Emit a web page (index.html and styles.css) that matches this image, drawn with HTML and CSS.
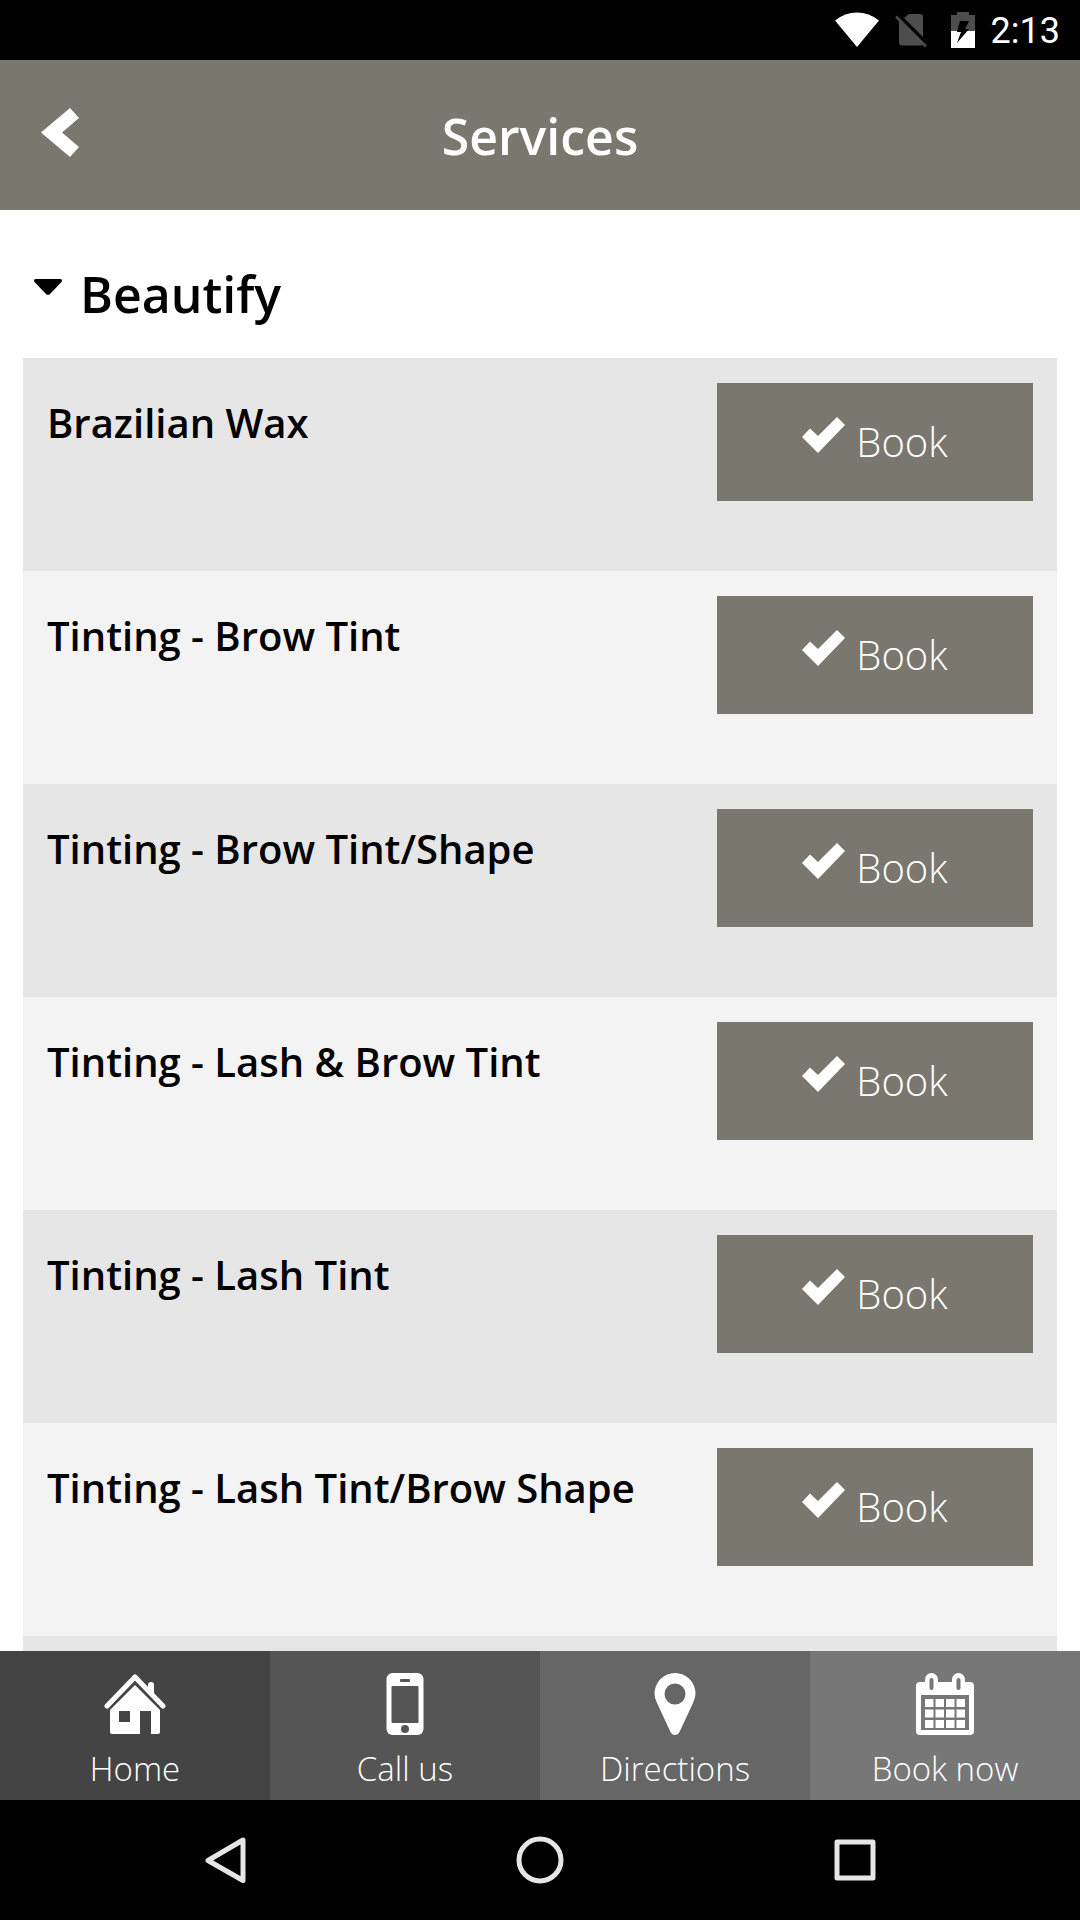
FILE: index.html
```html
<!DOCTYPE html>
<html lang="en">
<head>
  <meta charset="UTF-8" />
  <meta name="viewport" content="width=device-width, initial-scale=1.0"/>
  <title>Services</title>
  <link rel="stylesheet" href="styles.css">
</head>
<body>
  <svg class="sprite" aria-hidden="true">
    <symbol id="check" viewBox="0 0 44 36">
      <path d="M0 20L8 11.500L16 19L35 0L43 8L16 36Z"/>
    </symbol>
  </svg>

  <div class="status-bar">
    <svg width="44" height="36" viewBox="0 0 44 36">
      <path fill="#fff" d="M0 8.500Q10 .5 22 .5T44 8.500L22 35Z"/>
    </svg>
    <svg width="40" height="36" viewBox="0 0 40 36">
      <path fill="#4d4d4d" d="M14 2H25Q28 2 28 5V25L9 6ZM4 8L28 32Q27 33.500 25 33.500H7Q4 33.500 4 30.500Z"/>
      <path stroke="#4d4d4d" stroke-width="2.500" d="M1 4.500L31 34.500"/>
    </svg>
    <svg width="24" height="36" viewBox="0 0 24 36">
      <path fill="#4d4d4d" d="M6 0H18V3H24V19H0V3H6Z"/>
      <path fill="#fff" d="M0 19H24V36H0Z"/>
      <path d="M9 9H18L14 17H18L6 31L10 20H6Z"/>
    </svg>
    <span class="clock">2:13</span>
  </div>

  <header class="header">
    <button class="back" aria-label="Back">
      <svg width="38" height="49" viewBox="0 0 38 49">
        <path fill="#fff" d="M0 24.500L29 0L38 10L21 24.500L38 39L29 49Z"/>
      </svg>
    </button>
    <h1>Services</h1>
  </header>

  <main class="content">
    <h2>
      <button class="category" aria-expanded="true">
        <svg width="28" height="16" viewBox="0 0 28 16">
          <path d="M2 0H26Q29 0 27.500 3L16 15Q14 17 12 15L.5 3Q-1 0 2 0Z"/>
        </svg>
        Beautify
      </button>
    </h2>

    <ul class="services">
      <li>
        <h3>Brazilian Wax</h3>
        <button class="book"><svg><use href="#check"/></svg>Book</button>
      </li>
      <li>
        <h3>Tinting - Brow Tint</h3>
        <button class="book"><svg><use href="#check"/></svg>Book</button>
      </li>
      <li>
        <h3>Tinting - Brow Tint/Shape</h3>
        <button class="book"><svg><use href="#check"/></svg>Book</button>
      </li>
      <li>
        <h3>Tinting - Lash &amp; Brow Tint</h3>
        <button class="book"><svg><use href="#check"/></svg>Book</button>
      </li>
      <li>
        <h3>Tinting - Lash Tint</h3>
        <button class="book"><svg><use href="#check"/></svg>Book</button>
      </li>
      <li>
        <h3>Tinting - Lash Tint/Brow Shape</h3>
        <button class="book"><svg><use href="#check"/></svg>Book</button>
      </li>
      <li></li>
    </ul>
  </main>

  <nav class="tabs">
    <a href="#">
      <svg width="62" height="62" viewBox="0 0 62 62">
        <path fill="none" stroke="#fff" stroke-width="5" stroke-linecap="round" stroke-linejoin="round" d="M3 33L31 4L59 33"/>
        <path fill="#fff" d="M44 12Q44 9 47 9T50 12V25L44 19Z"/>
        <path fill="#fff" fill-rule="evenodd" d="M31 12L56 37V59Q56 61 54 61H47V38H36V61H8Q6 61 6 59V37ZM15 38V49H26V38Z"/>
      </svg>
      Home
    </a>
    <a href="#">
      <svg width="38" height="62" viewBox="0 0 38 62">
        <rect width="37" height="62" x=".5" rx="6" fill="#fff"/>
        <rect x="5.500" y="13" width="27" height="37" rx="1" fill="#555"/>
        <rect x="14" y="6" width="10" height="3" rx="1" fill="#555"/>
        <circle cx="19" cy="56" r="4" fill="#555"/>
      </svg>
      Call us
    </a>
    <a href="#">
      <svg width="42" height="62" viewBox="0 0 42 62">
        <path fill="#fff" fill-rule="evenodd" d="M21 0A20.500 20.500 0 0 1 41.500 20.500Q41.500 25 39 30L25.500 59Q24 62 21 62T16.500 59L3 30Q.5 25 .5 20.500A20.500 20.500 0 0 1 21 0ZM21 10.500A10.500 10.500 0 1 0 21 31.500A10.500 10.500 0 1 0 21 10.500Z"/>
      </svg>
      Directions
    </a>
    <a href="#">
      <svg width="58" height="62" viewBox="0 0 58 62">
        <rect y="9" width="58" height="53" rx="4" fill="#fff"/>
        <path stroke="#fff" stroke-width="13" stroke-linecap="round" d="M15.500 6.500V13M42.500 6.500V13"/>
        <path stroke="#777" stroke-width="4" stroke-linecap="round" d="M15.500 7V15M42.500 7V15"/>
        <path fill="#777" d="M5 22H53V57H5Z"/>
        <path stroke="#fff" stroke-width="8" stroke-dasharray="8.500 2" d="M9 30H49M9 40.500H49M9 51H49"/>
      </svg>
      Book now
    </a>
  </nav>

  <div class="system-nav">
    <button aria-label="Back">
      <svg width="48" height="48" viewBox="0 0 48 48">
        <path d="M7 24.500L42 4V44.500Z"/>
      </svg>
    </button>
    <button aria-label="Home">
      <svg width="48" height="48" viewBox="0 0 48 48">
        <circle cx="24" cy="24" r="21"/>
      </svg>
    </button>
    <button aria-label="Recent apps">
      <svg width="48" height="48" viewBox="0 0 48 48">
        <rect x="6" y="6" width="36" height="36"/>
      </svg>
    </button>
  </div>
</body>
</html>
```
FILE: styles.css
```css
:root {
  --brand: #7a776f;
  --row-odd: #e6e6e6;
  --row-even: #f3f3f3;
}

* {
  box-sizing: border-box;
}

body {
  margin: 0;
  height: 100vh;
  display: flex;
  flex-direction: column;
  font-family: 'Open Sans', 'Noto Sans', sans-serif;
  background: #fff;
  color: #000;
}

h1, h2, h3, ul {
  margin: 0;
  padding: 0;
}

button {
  font: inherit;
  color: inherit;
  border: none;
  background: none;
  padding: 0;
  cursor: pointer;
}

svg {
  display: block;
  flex: none;
}

.sprite {
  display: none;
}

/* status bar */
.status-bar {
  flex: none;
  height: 60px;
  padding: 0 20px;
  display: flex;
  align-items: center;
  justify-content: flex-end;
  gap: 16px;
  background: #000;
}

.clock {
  font-family: Roboto, sans-serif;
  font-size: 36px;
  color: #fff;
  padding-top: 2px;
}

/* header */
.header {
  flex: none;
  height: 150px;
  padding: 0 41px;
  display: grid;
  grid-template-columns: 1fr auto 1fr;
  align-items: center;
  background: var(--brand);
  color: #fff;
}

.back {
  justify-self: start;
  padding-bottom: 5px;
}

h1 {
  font-size: 50px;
  line-height: 60px;
  font-weight: 600;
  padding-top: 2px;
}

/* services */
.content {
  flex: 1;
  min-height: 0;
  overflow: hidden;
  padding: 0 23px;
}

.category {
  display: flex;
  align-items: center;
  gap: 18px;
  padding: 54px 11px 34px;
  font-size: 50px;
  line-height: 60px;
  font-weight: 600;
}

.category svg {
  margin-bottom: 14px;
}

.services {
  list-style: none;
}

.services li {
  height: 213px;
  padding: 25px 24px;
  display: flex;
  justify-content: space-between;
  align-items: flex-start;
  background: var(--row-odd);
}

.services li:nth-child(even) {
  background: var(--row-even);
}

h3 {
  font-size: 40px;
  line-height: 80px;
  font-weight: 600;
}

.book {
  display: flex;
  align-items: center;
  justify-content: center;
  gap: 10px;
  flex: none;
  width: 316px;
  height: 118px;
  padding-bottom: 2px;
  background: var(--brand);
  color: #fff;
  font-size: 40px;
  font-weight: 300;
}

.book svg {
  width: 44px;
  height: 36px;
  margin-bottom: 12px;
  fill: #fff;
}

/* bottom tabs */
.tabs {
  flex: none;
  display: flex;
}

.tabs a {
  flex: 1;
  display: flex;
  flex-direction: column;
  align-items: center;
  gap: 10px;
  padding: 22px 0 7px;
  color: #fff;
  font-size: 33px;
  line-height: 48px;
  font-weight: 300;
  text-decoration: none;
  background: #444;
}

.tabs a:nth-child(2) {
  background: #555;
}

.tabs a:nth-child(3) {
  background: #666;
}

.tabs a:nth-child(4) {
  background: #777;
}

/* android buttons */
.system-nav {
  flex: none;
  height: 120px;
  padding: 0 68px;
  display: flex;
  background: #000;
}

.system-nav button {
  flex: 1;
  display: flex;
  align-items: center;
  justify-content: center;
}

.system-nav svg {
  fill: none;
  stroke: #e6e6e6;
  stroke-width: 5;
  stroke-linejoin: round;
}
```
